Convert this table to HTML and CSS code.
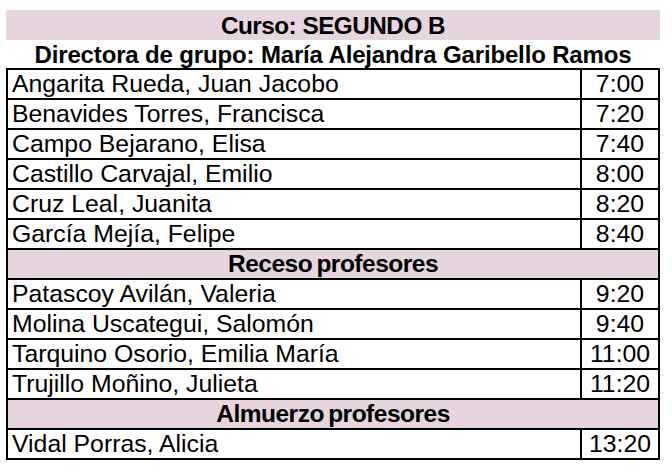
FILE: index.html
```html
<!DOCTYPE html>
<html lang="es">
<head>
<meta charset="utf-8">
<link rel="stylesheet" href="styles.css">
</head>
<body>
<div class="sheet">
  <div class="course">Curso: SEGUNDO B</div>
  <div class="director">Directora de grupo: María Alejandra Garibello Ramos</div>
  <table class="schedule">
    <tr><td class="name">Angarita Rueda, Juan Jacobo</td><td class="time">7:00</td></tr>
    <tr><td class="name">Benavides Torres, Francisca</td><td class="time">7:20</td></tr>
    <tr><td class="name">Campo Bejarano, Elisa</td><td class="time">7:40</td></tr>
    <tr><td class="name">Castillo Carvajal, Emilio</td><td class="time">8:00</td></tr>
    <tr><td class="name">Cruz Leal, Juanita</td><td class="time">8:20</td></tr>
    <tr><td class="name">García Mejía, Felipe</td><td class="time">8:40</td></tr>
    <tr><td class="break" colspan="2">Receso profesores</td></tr>
    <tr><td class="name">Patascoy Avilán, Valeria</td><td class="time">9:20</td></tr>
    <tr><td class="name">Molina Uscategui, Salomón</td><td class="time">9:40</td></tr>
    <tr><td class="name">Tarquino Osorio, Emilia María</td><td class="time">11:00</td></tr>
    <tr><td class="name">Trujillo Moñino, Julieta</td><td class="time">11:20</td></tr>
    <tr><td class="break" colspan="2">Almuerzo profesores</td></tr>
    <tr><td class="name">Vidal Porras, Alicia</td><td class="time">13:20</td></tr>
  </table>
</div>
</body>
</html>
```
FILE: styles.css
```css
html, body {
  margin: 0;
  padding: 0;
  background: #fff;
}
body {
  font-family: "Liberation Sans", Arial, sans-serif;
  color: #000;
}
.sheet {
  width: 654px;
  margin: 10px 0 0 6px;
}
.course {
  height: 30px;
  line-height: 31px;
  background: #e6d4de;
  text-align: center;
  font-weight: bold;
  font-size: 24.3px;
  letter-spacing: -0.5px;
}
.director {
  height: 28px;
  line-height: 29px;
  text-align: center;
  font-weight: bold;
  font-size: 24px;
  letter-spacing: -0.15px;
}
.schedule {
  width: 654px;
  border-collapse: collapse;
  border: 2px solid #000;
  font-size: 24.8px;
}
.schedule td {
  border: 2px solid #000;
  height: 30px;
  padding: 0 4px;
  line-height: 28px;
  box-sizing: border-box;
}
.schedule .time {
  width: 78px;
  text-align: center;
}
.schedule .break {
  background: #e6d4de;
  text-align: center;
  font-weight: bold;
  font-size: 24.5px;
  letter-spacing: -0.5px;
  word-spacing: -2px;
}
```
